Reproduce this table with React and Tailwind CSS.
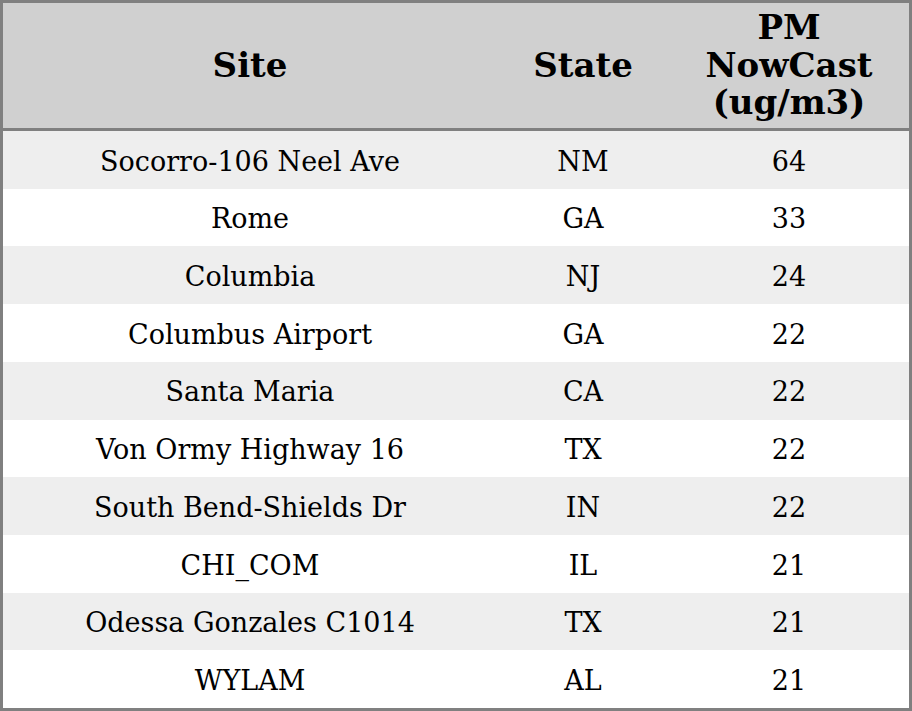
const rows = [
  ['Socorro-106 Neel Ave', 'NM', '64'],
  ['Rome', 'GA', '33'],
  ['Columbia', 'NJ', '24'],
  ['Columbus Airport', 'GA', '22'],
  ['Santa Maria', 'CA', '22'],
  ['Von Ormy Highway 16', 'TX', '22'],
  ['South Bend-Shields Dr', 'IN', '22'],
  ['CHI_COM', 'IL', '21'],
  ['Odessa Gonzales C1014', 'TX', '21'],
  ['WYLAM', 'AL', '21'],
];

export default function App() {
  return (
    <div className="w-[912px] h-[711px] border-[3px] border-[#808080] bg-white text-black font-['DejaVu_Serif',serif] flex flex-col">
      <div className="h-[125px] bg-[#d0d0d0] flex items-center border-b-[3px] border-[#808080] box-content text-[34px] font-bold leading-[37.5px] text-center">
        <div className="w-[494px]">Site</div>
        <div className="w-[172px]">State</div>
        <div className="flex-1">PM<br />NowCast<br />(ug/m3)</div>
      </div>
      <div className="flex-1 flex flex-col">
        {rows.map((r, i) => (
          <div
            key={r[0]}
            className={`flex-1 flex items-center pt-1 text-center text-[27px] ${i % 2 === 0 ? 'bg-[#eeeeee]' : 'bg-white'}`}
          >
            <div className="w-[494px]">{r[0]}</div>
            <div className="w-[172px]">{r[1]}</div>
            <div className="flex-1">{r[2]}</div>
          </div>
        ))}
      </div>
    </div>
  );
}
